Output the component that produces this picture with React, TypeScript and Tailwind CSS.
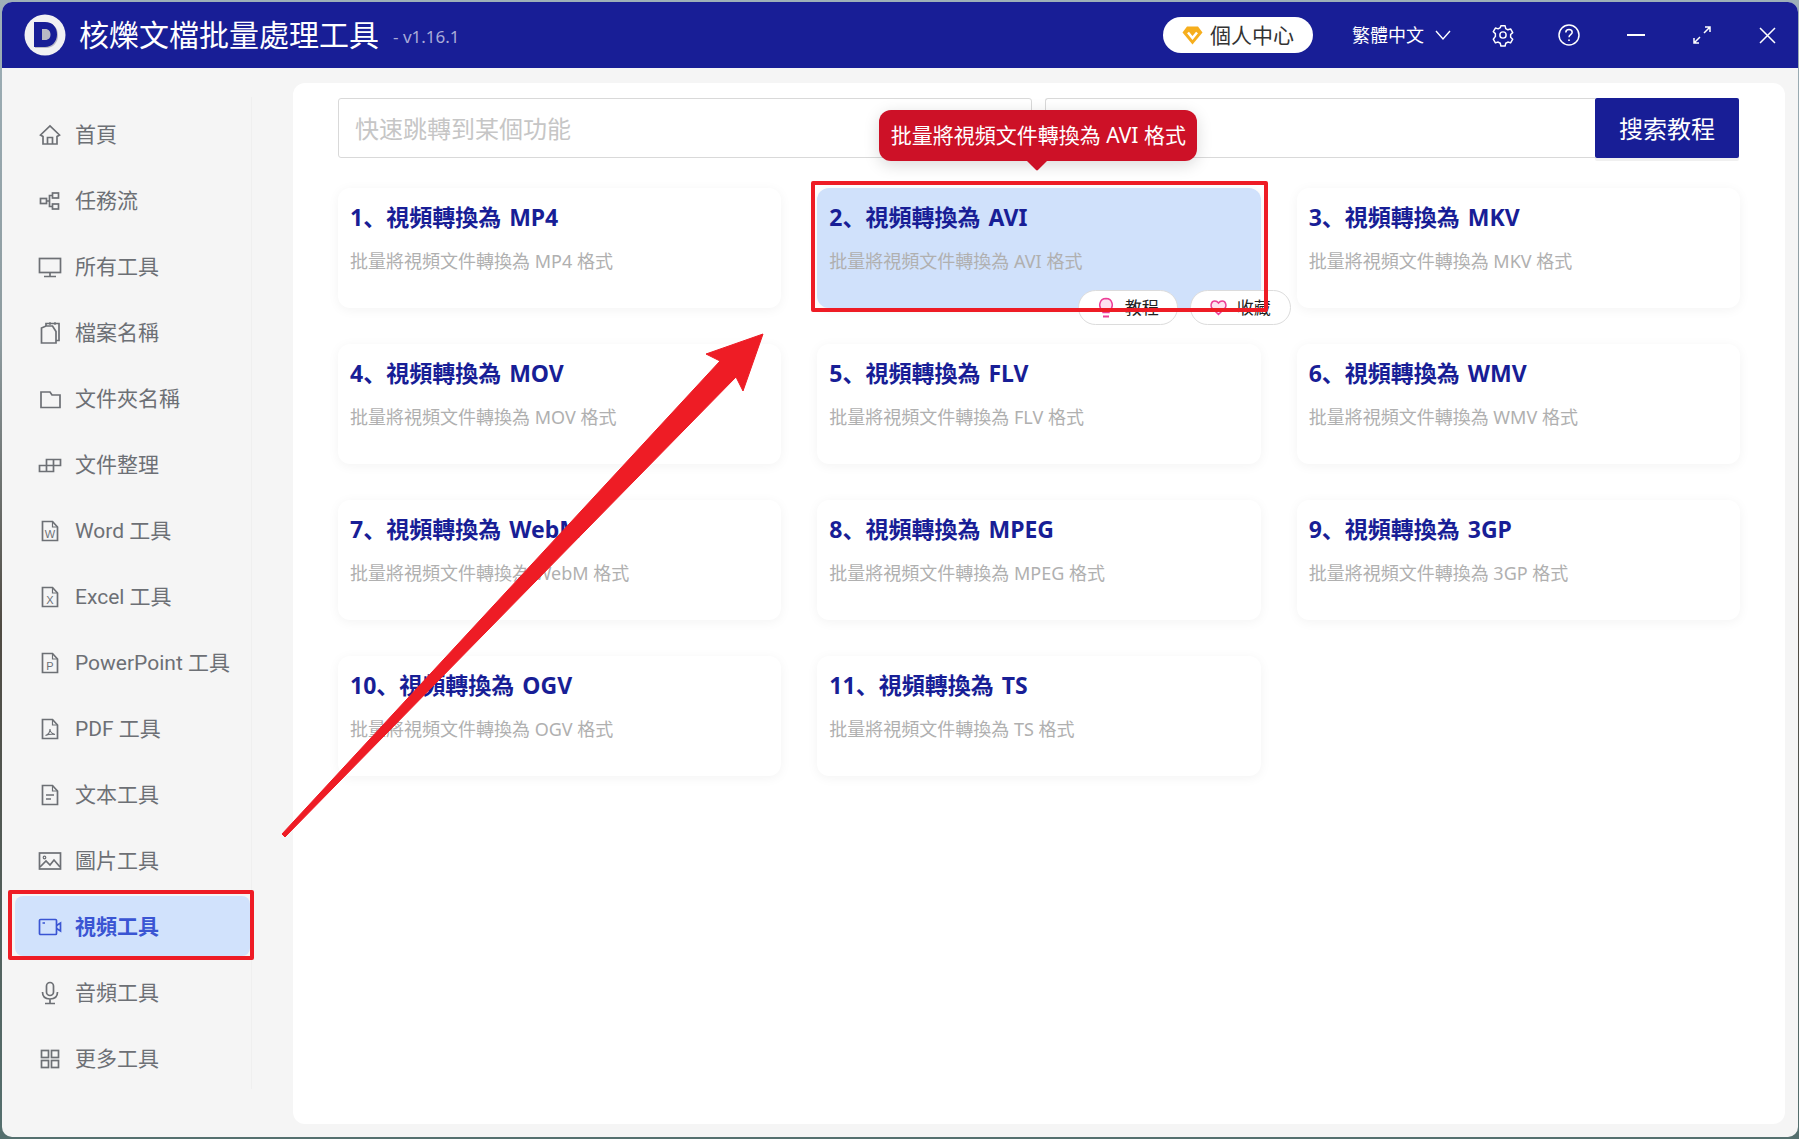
import type { ReactNode } from "react";

const FONT = "font-['Noto_Sans','Noto_Sans_CJK_SC',sans-serif]";

const Ico = ({ children, w = 24, h = 24 }: { children: ReactNode; w?: number; h?: number }) => (
  <svg width={w} height={h} viewBox="0 0 24 24" fill="none" stroke="currentColor" strokeWidth="1.7" strokeLinejoin="miter">
    {children}
  </svg>
);

const FileIco = ({ children }: { children?: ReactNode }) => (
  <Ico>
    <path d="M4.5 2.5h10l5 5.5v13.5h-15z" />
    <path d="M14.5 2.5v5.5h5" strokeWidth="1.2" />
    {children}
  </Ico>
);

const Letter = ({ c }: { c: string }) => (
  <text x="12" y="18.500" fontSize="11" textAnchor="middle" fill="currentColor" stroke="none" fontFamily="Liberation Sans, sans-serif">
    {c}
  </text>
);

const menu: { label: string; icon: ReactNode }[] = [
  {
    label: "首頁",
    icon: (
      <Ico>
        <path d="M2.5 12 12 3l9.5 9-2.5 1.5v7.5H5v-7.5z" />
        <path d="M9.5 21v-6.5h5V21" />
      </Ico>
    ),
  },
  {
    label: "任務流",
    icon: (
      <Ico>
        <rect x="2.5" y="9.5" width="6" height="5" />
        <rect x="14.5" y="4" width="6" height="5" />
        <rect x="14.5" y="15" width="6" height="5" />
        <path d="M8.5 12h3M14.5 6.5h-3v11h3" />
      </Ico>
    ),
  },
  {
    label: "所有工具",
    icon: (
      <Ico>
        <rect x="1.5" y="3.5" width="21" height="14" />
        <path d="M12 17.5v3.5M6 21.5h12" />
      </Ico>
    ),
  },
  {
    label: "檔案名稱",
    icon: (
      <Ico>
        <path d="M8 5V2.5h13v17h-3" />
        <path d="M3.5 7V22H18V10.5L14.5 5H8z" />
        <path d="M12 1v3M17 1v3" strokeWidth="1.2" />
      </Ico>
    ),
  },
  {
    label: "文件夾名稱",
    icon: (
      <Ico>
        <path d="M3 5h9l2 3h8v12.5H3z" />
      </Ico>
    ),
  },
  {
    label: "文件整理",
    icon: (
      <Ico>
        <path d="M1.5 12.5h7v-6h7v6h-7v6h-7zM8.500 12.500v6h7v-6M15.500 6.500h7v6h-7" />
      </Ico>
    ),
  },
  { label: "Word 工具", icon: <FileIco><Letter c="W" /></FileIco> },
  { label: "Excel 工具", icon: <FileIco><Letter c="X" /></FileIco> },
  { label: "PowerPoint 工具", icon: <FileIco><Letter c="P" /></FileIco> },
  {
    label: "PDF 工具",
    icon: (
      <FileIco>
        <path d="M7.500 18.500c3-1 4.500-4 4.500-6.500 0 2.500 2 5 5 5.500-3.500-.5-7 .0-9.500 1z" strokeWidth="1.1" />
      </FileIco>
    ),
  },
  {
    label: "文本工具",
    icon: (
      <FileIco>
        <path d="M8 12h8M8 16h5" />
      </FileIco>
    ),
  },
  {
    label: "圖片工具",
    icon: (
      <Ico>
        <rect x="1.500" y="4" width="21" height="16" />
        <circle cx="6.500" cy="8.500" r="1.300" strokeWidth="1.200" />
        <path d="m2 18 6-6 4 4 4-5 6 7" />
      </Ico>
    ),
  },
  {
    label: "視頻工具",
    icon: (
      <Ico>
        <rect x="1.500" y="4.500" width="17" height="15" rx="1" />
        <path d="M18.500 10.500 22.500 8v8l-4-2.500M4.500 8h2.500" />
      </Ico>
    ),
  },
  {
    label: "音頻工具",
    icon: (
      <Ico>
        <rect x="8.500" y="1.500" width="7" height="13" rx="3.500" />
        <path d="M4.500 11c0 4.500 3 7 7.500 7s7.500-2.500 7.500-7M12 18v4M7 22.500h10" />
      </Ico>
    ),
  },
  {
    label: "更多工具",
    icon: (
      <Ico>
        <rect x="3.500" y="3.500" width="7" height="7" />
        <rect x="13.500" y="3.500" width="7" height="7" />
        <rect x="3.500" y="13.500" width="7" height="7" />
        <rect x="13.500" y="13.500" width="7" height="7" />
      </Ico>
    ),
  },
];

const tools = ["MP4", "AVI", "MKV", "MOV", "FLV", "WMV", "WebM", "MPEG", "3GP", "OGV", "TS"];

const Logo = () => (
  <svg width="42" height="42" viewBox="0 0 42 42">
    <circle cx="21" cy="21" r="20.500" fill="#f1f1f3" />
    <path d="M11 9h11c8 0 12 5.500 12 12.500S29 34 22 34H11z" fill="#b9b9c4" />
    <path d="M10 8h11c8 0 12 5.500 12 12.500S28 33 21 33H10zM18 15v11h3c4 0 5.500-2.500 5.500-5.500S25 15 21 15z" fill="#181e96" fillRule="evenodd" />
  </svg>
);

const Diamond = () => (
  <svg width="21" height="19" viewBox="0 0 21 19">
    <path d="M5 .5h11l4.500 6L10.500 18.500.5 6.500z" fill="#f6ae1d" />
    <path d="m6 6.500 4.500 5.500L15 6.500" fill="none" stroke="#fff" strokeWidth="2.500" />
  </svg>
);

const WinIcons = () => (
  <>
    <svg className="ml-[11px]" width="16" height="11" viewBox="0 0 16 11" fill="none" stroke="#fff" strokeWidth="1.400">
      <path d="m1 1 7 8 7-8" />
    </svg>
    <svg className="ml-[41px]" width="22" height="24" viewBox="0 0 24 24" fill="none" stroke="#fff" strokeWidth="1.600">
      <path d="M9.700 2h4.600l.7 3 2.300 1.300 3-.9 2.300 4-2.300 2.100v3l2.300 2.100-2.300 4-3-.9-2.300 1.300-.7 3H9.700l-.7-3-2.300-1.300-3 .9-2.300-4L3.700 13.500v-3L1.400 8.400l2.300-4 3 .9L9 4z" strokeLinejoin="round" />
      <circle cx="12" cy="12" r="3.400" />
    </svg>
    <svg className="ml-[44px]" width="22" height="22" viewBox="0 0 22 22" fill="none" stroke="#fff" strokeWidth="1.500">
      <circle cx="11" cy="11" r="10" />
      <path d="M7.800 8.500C7.800 6.500 9.300 5.500 11 5.500s3.200 1 3.200 2.800c0 2.400-3.200 2.400-3.200 5" />
      <circle cx="11" cy="16.200" r=".9" fill="#fff" stroke="none" />
    </svg>
    <svg className="ml-[47px]" width="18" height="2" viewBox="0 0 18 2">
      <rect width="18" height="2" fill="#fff" />
    </svg>
    <svg className="ml-[48px]" width="18" height="18" viewBox="0 0 18 18" fill="none" stroke="#fff" strokeWidth="1.500">
      <path d="M11 7 17 1M12 1h5v5M7 11l-6 6M1 12v5h5" />
    </svg>
    <svg className="ml-[48px]" width="17" height="17" viewBox="0 0 17 17" fill="none" stroke="#fff" strokeWidth="1.500">
      <path d="m1 1 15 15M16 1 1 16" />
    </svg>
  </>
);

const Card = ({ n, fmt, active }: { n: number; fmt: string; active: boolean }) => (
  <div className={`relative h-[120px] rounded-xl px-3 pt-[13px] shadow-[0_2px_12px_rgba(0,0,0,0.05)] ${active ? "bg-[#d0e1fb]" : "bg-white"}`}>
    <div className="text-[23px] leading-8 font-bold text-[#181e96] [word-spacing:2px]">
      {n}、視頻轉換為 {fmt}
    </div>
    <div className="mt-[16px] text-[18px] leading-6 text-[#b0b0b0]">批量將視頻文件轉換為 {fmt} 格式</div>
    {active && (
      <>
        <div className="absolute right-[83px] top-[102px] flex h-[35px] w-[100px] items-center rounded-full border border-[#dcdcdc] bg-white pl-[19px] text-[17px] text-[#222]">
          <svg width="16" height="22" viewBox="0 0 16 22" fill="#fde3f0" stroke="#ec3f97" strokeWidth="1.500">
            <path d="M8 1.500a6.300 6.300 0 0 0-3 11.800v2.200h6v-2.200A6.300 6.300 0 0 0 8 1.500z" />
            <path d="M5 19.500h6" strokeWidth="2" />
          </svg>
          <span className="ml-[11px]">教程</span>
        </div>
        <div className="absolute right-[-30px] top-[102px] flex h-[35px] w-[101px] items-center rounded-full border border-[#dcdcdc] bg-white pl-[19px] text-[17px] text-[#222]">
          <svg width="17" height="17" viewBox="0 0 17 17" fill="#fde3f0" stroke="#ec3f97" strokeWidth="1.500">
            <path d="M8.500 15.500 2 9C.3 7 1 2 4.800 2c1.700 0 3 1 3.700 2 .7-1 2-2 3.700-2C16 2 16.700 7 15 9z" />
          </svg>
          <span className="ml-[10px]">收藏</span>
        </div>
        <div className="absolute left-[62px] top-[-78px] flex h-[51px] w-[318px] items-center justify-center rounded-xl bg-[#cd1127] pt-[1px] text-[21px] whitespace-nowrap text-white shadow-[0_4px_16px_rgba(0,0,0,0.15)]">
          批量將視頻文件轉換為 AVI 格式
          <span className="absolute left-[150px] top-[42px] h-[16px] w-[16px] rotate-45 rounded-[2px] bg-[#cd1127] [clip-path:polygon(100%_0,100%_100%,0_100%)]" />
        </div>
        <div className="absolute left-[-6px] top-[-7px] h-[131px] w-[457px] rounded-[2px] border-[4px] border-[#ee1c25]" />
      </>
    )}
  </div>
);

const App = () => {
  return (
    <div className={`relative h-[1139px] w-[1799px] overflow-hidden bg-[linear-gradient(180deg,#9eb0b8_0%,#8d9b9f_30%,#4f4a42_55%,#55706f_100%)] pl-[2px] pt-[2px] ${FONT}`}>
      <div className="flex h-[1135px] w-[1796px] flex-col overflow-hidden rounded-[10px] bg-[#f5f5f5]">
        <header className="flex h-[66px] shrink-0 items-center bg-[#181e96] pl-[22px] text-white">
          <Logo />
          <span className="ml-[13px] text-[30px] leading-none whitespace-nowrap">核爍文檔批量處理工具</span>
          <span className="ml-[14px] mt-[3px] text-[17px] text-[#a9abd8]">- v1.16.1</span>
          <div className="ml-auto flex items-center pr-[22px]">
            <div className="flex h-[36px] w-[150px] items-center rounded-full bg-white pl-[19px] text-[21px] text-[#333]">
              <Diamond />
              <span className="ml-[7px] leading-none">個人中心</span>
            </div>
            <span className="ml-[39px] text-[18px]">繁體中文</span>
            <WinIcons />
          </div>
        </header>
        <div className="flex min-h-0 flex-1">
          <aside className="w-[291px] shrink-0 pt-[29px]">
            <nav className="flex h-[992px] w-[250px] flex-col gap-[6px] border-r border-[#efefef] py-[7px] pl-[13px] pr-[1px] font-['Roboto','Noto_Sans_CJK_SC',sans-serif]">
              {menu.map((m) => {
                const active = m.label === "視頻工具";
                return (
                  <div
                    key={m.label}
                    className={`relative flex h-[60px] shrink-0 items-center rounded-lg pl-[23px] text-[21px] ${active ? "bg-[#d1e2fc] font-bold text-[#3a55d3]" : "text-[#6d7075]"}`}
                  >
                    <span className="mt-[2px] flex w-[24px] justify-center">{m.icon}</span>
                    <span className="ml-[13px] mt-[4px] whitespace-nowrap">{m.label}</span>
                    {active && <span className="absolute bottom-[-4px] left-[-7px] right-[-4px] top-[-6px] rounded-[2px] border-[4px] border-[#ee1c25]" />}
                  </div>
                );
              })}
            </nav>
          </aside>
          <main className="mb-[13px] mr-[13px] mt-[15px] flex-1 rounded-xl bg-white px-[45px] pt-[15px]">
            <div className="mr-[1px] flex h-[60px] gap-[13px]">
              <div className="flex w-[694px] items-center rounded-[3px] border border-[#d9d9d9] pl-[16px] pt-[1px] text-[24px] text-[#c6c6c6]">快速跳轉到某個功能</div>
              <div className="flex flex-1">
                <div className="flex-1 rounded-l-[3px] border-y border-l border-[#d9d9d9]" />
                <div className="flex w-[144px] items-center justify-center rounded-[2px] bg-[#181e96] pt-[1px] text-[24px] text-white shadow-[0_3px_0_#f0f0f0]">搜索教程</div>
              </div>
            </div>
            <div className="mt-[30px] grid grid-cols-3 gap-x-[36px] gap-y-[36px]">
              {tools.map((fmt, i) => (
                <Card key={fmt} n={i + 1} fmt={fmt} active={fmt === "AVI"} />
              ))}
            </div>
          </main>
        </div>
      </div>
      <svg className="pointer-events-none absolute left-0 top-0" width="1799" height="1139" viewBox="0 0 1799 1139">
        <polygon points="763,334 706,354 720,361 282,834 285,837 736,377 743,391" fill="#ee1c25" stroke="#ee1c25" strokeWidth="1" strokeLinejoin="round" />
      </svg>
    </div>
  );
};

export default App;
